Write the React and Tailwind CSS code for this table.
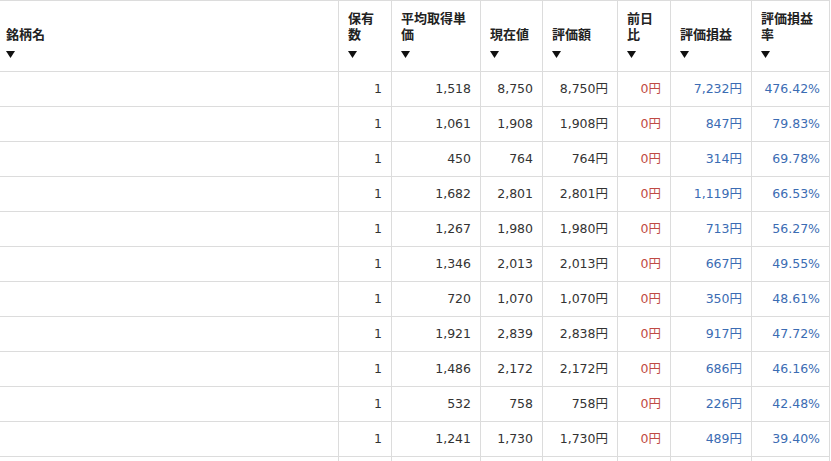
import React from "react";

const headers = [
  { label: "銘柄名", w: "w-[339px]", pl: "pl-[6px]" },
  { label: "保有数", w: "w-[53px]", pl: "pl-[9px]" },
  { label: "平均取得単価", w: "w-[89px]", pl: "pl-[9px]" },
  { label: "現在値", w: "w-[62px]", pl: "pl-[9px]" },
  { label: "評価額", w: "w-[75px]", pl: "pl-[9px]" },
  { label: "前日比", w: "w-[53px]", pl: "pl-[9px]" },
  { label: "評価損益", w: "w-[81px]", pl: "pl-[9px]" },
  { label: "評価損益率", w: "w-[78px]", pl: "pl-[9px]" },
];

const rows = [
  ["1", "1,518", "8,750", "8,750円", "0円", "7,232円", "476.42%"],
  ["1", "1,061", "1,908", "1,908円", "0円", "847円", "79.83%"],
  ["1", "450", "764", "764円", "0円", "314円", "69.78%"],
  ["1", "1,682", "2,801", "2,801円", "0円", "1,119円", "66.53%"],
  ["1", "1,267", "1,980", "1,980円", "0円", "713円", "56.27%"],
  ["1", "1,346", "2,013", "2,013円", "0円", "667円", "49.55%"],
  ["1", "720", "1,070", "1,070円", "0円", "350円", "48.61%"],
  ["1", "1,921", "2,839", "2,838円", "0円", "917円", "47.72%"],
  ["1", "1,486", "2,172", "2,172円", "0円", "686円", "46.16%"],
  ["1", "532", "758", "758円", "0円", "226円", "42.48%"],
  ["1", "1,241", "1,730", "1,730円", "0円", "489円", "39.40%"],
  ["", "", "", "", "", "", ""],
];

function Arrow() {
  return (
    <svg width="9" height="7" viewBox="0 0 9 7" className="block">
      <polygon points="0,0 9,0 4.5,7" fill="#111" />
    </svg>
  );
}

export default function App() {
  return (
    <div className="bg-white w-[831px] h-[461px] overflow-hidden" style={{ fontFamily: '"DejaVu Sans", "Noto Sans CJK JP", sans-serif' }}>
      <table className="table-fixed border-separate border-spacing-0 w-[830px] text-[#333]">
        <thead>
          <tr>
            {headers.map((h, i) => (
              <th
                key={i}
                className={`${h.w} ${h.pl} pr-[8px] pb-[13px] align-bottom text-left font-bold text-[13px] leading-4 border-t border-b border-r border-[#dcdcdc] h-[72px] text-[#222]`}
                style={{ fontFamily: '"Noto Sans CJK JP", sans-serif' }}
              >
                <div>{h.label}</div>
                <div className="mt-[9px]">
                  <Arrow />
                </div>
              </th>
            ))}
          </tr>
        </thead>
        <tbody>
          {rows.map((r, ri) => (
            <tr key={ri}>
              <td className="h-[35px] border-b border-r border-[#dcdcdc]"></td>
              {r.map((c, ci) => (
                <td
                  key={ci}
                  className={`h-[35px] border-b border-r border-[#dcdcdc] text-right pr-[9px] align-middle text-[12.5px] whitespace-nowrap ${
                    ci === 4 ? "text-[#bf4a44]" : ci >= 5 ? "text-[#3b6cb3]" : "text-[#333]"
                  }`}
                >
                  {c}
                </td>
              ))}
            </tr>
          ))}
        </tbody>
      </table>
    </div>
  );
}
